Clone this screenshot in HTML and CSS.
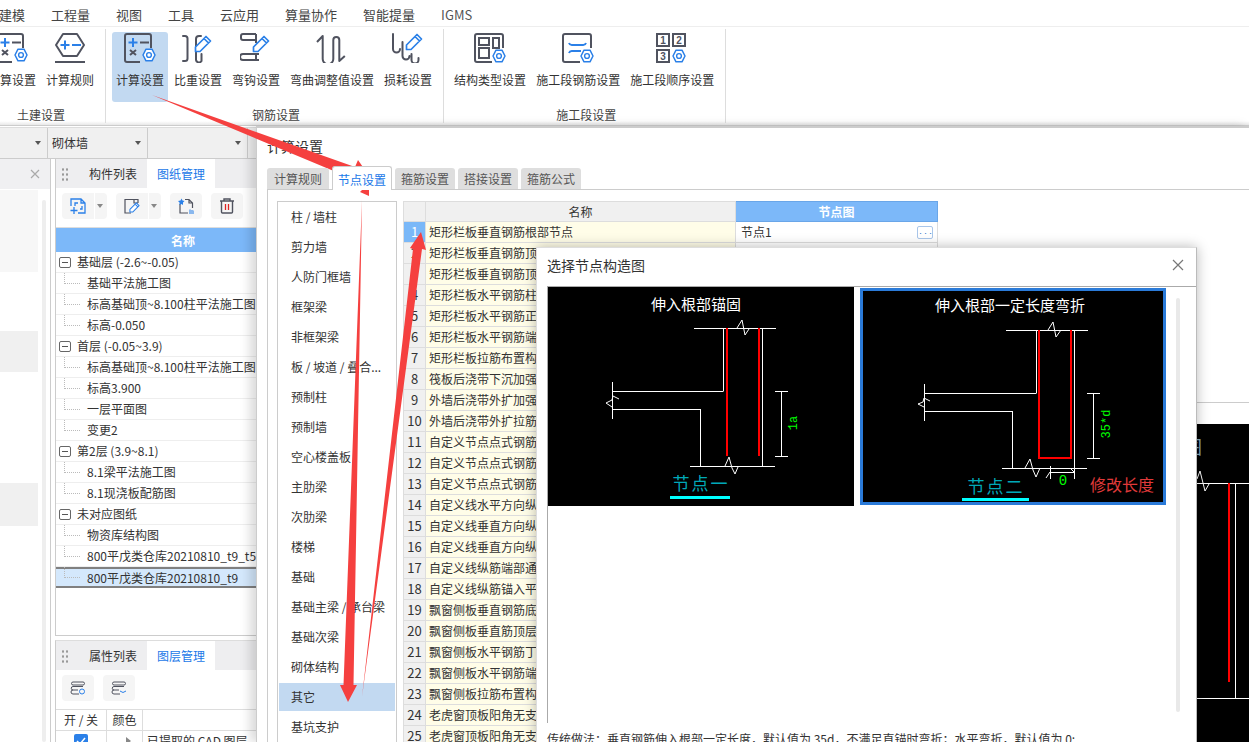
FILE: index.html
```html
<!DOCTYPE html>
<html lang="zh">
<head>
<meta charset="utf-8">
<title>计算设置</title>
<link rel="stylesheet" href="styles.css">
</head>
<body>
<svg class="defs" width="0" height="0">
  <symbol id="gear" viewBox="0 0 14 14"><polygon points="4,1.2 10,1.2 13,7 10,12.8 4,12.8 1,7" fill="#fff" stroke="#2b80e8" stroke-width="1.5" stroke-linejoin="round"/><circle cx="7" cy="7" r="2.4" fill="none" stroke="#2b80e8" stroke-width="1.4"/></symbol>
  <symbol id="pencil" viewBox="0 0 18 18"><path d="M1.500 16.500v-4.500L12 1.500l4.500 4.500L6 16.500z M10 3.500l4.500 4.500" fill="#fff" stroke="#2b80e8" stroke-width="1.700" stroke-linejoin="round"/></symbol>
  <symbol id="calc" viewBox="0 0 34 30"><path d="M28 15V3a2 2 0 0 0-2-2H4a2 2 0 0 0-2 2v24a2 2 0 0 0 2 2h13" fill="none" stroke="#50535f" stroke-width="2"/><path d="M10 5v9M5.500 9.500h9" stroke="#2b80e8" stroke-width="2"/><path d="M17 9.500h9" stroke="#50535f" stroke-width="2"/><path d="M7 17l6 5M13 17l-6 5" stroke="#50535f" stroke-width="2"/><use href="#gear" x="19" y="15" width="14" height="14"/></symbol>
</svg>

<header class="menu">
  <span class="menu-item menu-first">建模</span><span class="menu-item">工程量</span><span class="menu-item">视图</span><span class="menu-item">工具</span><span class="menu-item">云应用</span><span class="menu-item">算量协作</span><span class="menu-item">智能提量</span><span class="menu-item">IGMS</span>
</header>

<section class="ribbon">
  <div class="group group-first">
    <div class="btns">
      <div class="rbtn"><svg class="ico" width="34" height="30"><use href="#calc"/></svg><span>计算设置</span></div>
      <div class="rbtn"><svg class="ico" width="32" height="30" viewBox="0 0 32 30"><path d="M9 1h14l7 11-7 11H9L2 12z" fill="none" stroke="#50535f" stroke-width="2" stroke-linejoin="round"/><path d="M11 7.500v9M6.500 12h9" stroke="#2b80e8" stroke-width="2"/><path d="M18 12h9" stroke="#2b80e8" stroke-width="2"/><path d="M1 29h30" stroke="#50535f" stroke-width="2"/></svg><span>计算规则</span></div>
    </div>
    <div class="group-label">土建设置</div>
  </div>
  <div class="group">
    <div class="btns">
      <div class="rbtn rbtn-on"><svg class="ico" width="34" height="30"><use href="#calc"/></svg><span>计算设置</span></div>
      <div class="rbtn"><svg class="ico" width="32" height="30" viewBox="0 0 32 30"><path d="M1 3h2a2.500 2.500 0 0 1 2.500 2.500v20a2.500 2.500 0 0 1-2.500 2.500H1M19 3h-2a3 3 0 0 0-3 3v21a3 3 0 0 0 5.500 1V21" fill="none" stroke="#50535f" stroke-width="2" stroke-linecap="round"/><use href="#pencil" x="12" y="2" width="18" height="18"/></svg><span>比重设置</span></div>
      <div class="rbtn"><svg class="ico" width="32" height="30" viewBox="0 0 32 30"><path d="M16 1H3a2 2 0 0 0-2 2v2a2 2 0 0 0 2 2h13M16 1v9M3 21h16M3 27h16M16 21v6M3 21a3 3 0 0 0 0 6" fill="none" stroke="#50535f" stroke-width="2"/><use href="#pencil" x="12" y="2" width="18" height="18"/></svg><span>弯钩设置</span></div>
      <div class="rbtn"><svg class="ico" width="32" height="30" viewBox="0 0 32 30"><path d="M1 9l5.700-6V26a5 5 0 0 0 10.600 0V7a3 3 0 0 1 6 0V28l5.500-5" fill="none" stroke="#50535f" stroke-width="2" stroke-linejoin="round"/></svg><span>弯曲调整值设置</span></div>
      <div class="rbtn"><svg class="ico" width="32" height="30" viewBox="0 0 32 30"><path d="M1 1v15a3.500 3.500 0 0 0 7 0M10.500 9v14a3.500 3.500 0 0 0 7 0M19.500 21v6a3.500 3.500 0 0 0 7 0V25" fill="none" stroke="#50535f" stroke-width="2" stroke-linecap="round"/><use href="#pencil" x="13" y="0" width="18" height="18"/></svg><span>损耗设置</span></div>
    </div>
    <div class="group-label">钢筋设置</div>
  </div>
  <div class="group">
    <div class="btns">
      <div class="rbtn rbtn-wide"><svg class="ico" width="32" height="30" viewBox="0 0 32 30"><path d="M29 15V3a2 2 0 0 0-2-2H3a2 2 0 0 0-2 2v24a2 2 0 0 0 2 2h15" fill="none" stroke="#50535f" stroke-width="2"/><rect x="5" y="5" width="10" height="7" fill="none" stroke="#50535f" stroke-width="2"/><rect x="19" y="5" width="6" height="10" fill="none" stroke="#50535f" stroke-width="2"/><rect x="5" y="15" width="10" height="10" fill="none" stroke="#50535f" stroke-width="2"/><use href="#gear" x="18" y="16" width="14" height="14"/></svg><span>结构类型设置</span></div>
      <div class="rbtn"><svg class="ico" width="32" height="30" viewBox="0 0 32 30"><path d="M29 15V3a2 2 0 0 0-2-2H3a2 2 0 0 0-2 2v24a2 2 0 0 0 2 2h15" fill="none" stroke="#50535f" stroke-width="2"/><path d="M7 10a3 3 0 0 0 3 2h11a3 3 0 0 0 3-2M7 20a3 3 0 0 1 3-2h9" fill="none" stroke="#2b80e8" stroke-width="2"/><use href="#gear" x="18" y="16" width="14" height="14"/></svg><span>施工段钢筋设置</span></div>
      <div class="rbtn"><svg class="ico" width="32" height="30" viewBox="0 0 32 30"><rect x="1" y="1" width="12" height="12" fill="none" stroke="#50535f" stroke-width="2"/><rect x="17" y="1" width="12" height="12" fill="none" stroke="#50535f" stroke-width="2"/><rect x="1" y="17" width="12" height="12" fill="none" stroke="#50535f" stroke-width="2"/><text class="num-ico" x="7" y="11">1</text><text class="num-ico" x="23" y="11">2</text><text class="num-ico" x="7" y="27">3</text><use href="#gear" x="16" y="16" width="14" height="14"/></svg><span>施工段顺序设置</span></div>
    </div>
    <div class="group-label">施工段设置</div>
  </div>
</section>

<section class="combos">
  <div class="combo combo-first"><i class="caret"></i></div>
  <div class="combo"><span>砌体墙</span><i class="caret"></i></div>
  <div class="combo combo-end"><i class="caret"></i></div>
</section>

<main class="workspace">
  <aside class="side">
    <div class="side-head"><svg width="10" height="10" viewBox="0 0 10 10"><path d="M1 1l8 8M9 1l-8 8" stroke="#aaa" stroke-width="1.200"/></svg></div>
    <div class="side-body">
      <div class="side-list">
        <div class="side-fill"></div>
        <div class="side-sel side-sel-a"></div>
        <div class="side-sel side-sel-b"></div>
      </div>
      <div class="side-scroll"></div>
    </div>
  </aside>

  <div class="mid">
    <section class="panel panel-top">
      <div class="ptabs">
        <i class="grip"></i>
        <span class="ptab">构件列表</span>
        <span class="ptab ptab-on">图纸管理</span>
      </div>
      <div class="tools">
        <div class="tool tool-split"><svg width="16" height="16" viewBox="0 0 16 16"><path d="M1 8V1h10l4 4v10H8M11 1v4h4M5 8V5h3M12 8v3h-2" fill="none" stroke="#2b80e8" stroke-width="1.300"/><path d="M4 9v7M0.500 12.500h7" stroke="#2b80e8" stroke-width="1.300"/></svg><i class="tool-arrow"></i></div>
        <div class="tool tool-split"><svg width="16" height="16" viewBox="0 0 16 16"><path d="M14 5V1.500H4.500L1 1.500V15h6M10 1.500V5h4" fill="none" stroke="#50535f" stroke-width="1.200"/><use href="#pencil" x="5" y="4" width="11" height="11"/></svg><i class="tool-arrow"></i></div>
        <div class="tool"><svg width="16" height="16" viewBox="0 0 16 16"><path d="M7 1.500h4l3.500 3.500v5M10 15H2V6M11 1.500V5h3.500" fill="none" stroke="#50535f" stroke-width="1.200"/><path d="M3.500 0.500l1 2 2 .5-1.500 1.500v2.500L3.500 6 1.500 7V4.500L0 3l2.500-.5z" fill="#2b80e8"/><path d="M11 16v-4l1-1 1 1h2l1 1v3z" fill="#8ab8ee"/></svg></div>
        <div class="tool"><svg width="16" height="16" viewBox="0 0 16 16"><path d="M1 3h14M5 3V1h6v2M2.500 3v11a1 1 0 0 0 1 1h9a1 1 0 0 0 1-1V3" fill="none" stroke="#50535f" stroke-width="1.400"/><path d="M6.500 6v6M9.500 6v6" stroke="#d22" stroke-width="1.300"/></svg></div>
      </div>
      <div class="thead">名称</div>
      <div class="tree">
        <div class="row"><i class="box"></i><span>基础层 (-2.6~-0.05)</span></div>
        <div class="row"><i class="conn"></i><span>基础平法施工图</span></div>
        <div class="row"><i class="conn"></i><span>标高基础顶~8.100柱平法施工图</span></div>
        <div class="row"><i class="conn"></i><span>标高-0.050</span></div>
        <div class="row"><i class="box"></i><span>首层 (-0.05~3.9)</span></div>
        <div class="row"><i class="conn"></i><span>标高基础顶~8.100柱平法施工图</span></div>
        <div class="row"><i class="conn"></i><span>标高3.900</span></div>
        <div class="row"><i class="conn"></i><span>一层平面图</span></div>
        <div class="row"><i class="conn"></i><span>变更2</span></div>
        <div class="row"><i class="box"></i><span>第2层 (3.9~8.1)</span></div>
        <div class="row"><i class="conn"></i><span>8.1梁平法施工图</span></div>
        <div class="row"><i class="conn"></i><span>8.1现浇板配筋图</span></div>
        <div class="row"><i class="box"></i><span>未对应图纸</span></div>
        <div class="row"><i class="conn"></i><span>物资库结构图</span></div>
        <div class="row"><i class="conn"></i><span>800平戊类仓库20210810_t9_t5</span></div>
        <div class="row row-sel"><i class="conn"></i><span>800平戊类仓库20210810_t9</span></div>
      </div>
    </section>
    <section class="panel panel-bottom">
      <div class="ptabs">
        <i class="grip"></i>
        <span class="ptab">属性列表</span>
        <span class="ptab ptab-on">图层管理</span>
      </div>
      <div class="tools tools-b">
        <div class="tool"><svg width="16" height="14" viewBox="0 0 16 14"><path d="M3 1h10a1.500 1.500 0 0 1 0 3H3a1.500 1.500 0 0 1 0-3zM3 5.500h10M3 9h5M3 13h6M3 5.500a1.500 1.500 0 0 0 0 3.500M3 9a2 2 0 0 0 0 4" fill="none" stroke="#50535f" stroke-width="1"/><circle cx="12" cy="10.500" r="2.500" fill="none" stroke="#2b80e8"/></svg></div>
        <div class="tool"><svg width="16" height="14" viewBox="0 0 16 14"><path d="M3 1h10a1.500 1.500 0 0 1 0 3H3a1.500 1.500 0 0 1 0-3zM3 5.500h10M3 9h5M3 13h6M3 5.500a1.500 1.500 0 0 0 0 3.500M3 9a2 2 0 0 0 0 4" fill="none" stroke="#50535f" stroke-width="1"/><path d="M9 10q3 3 6 0" fill="none" stroke="#2b80e8"/></svg></div>
      </div>
      <div class="lhead"><span class="lc1">开 / 关</span><span class="lc2">颜色</span><span class="lc3"></span></div>
      <div class="lrow"><span class="lc1"><svg class="check" width="14" height="14" viewBox="0 0 14 14"><rect width="14" height="14" rx="2" fill="#2b80e8"/><path d="M3 7l3 3 5-6" fill="none" stroke="#fff" stroke-width="1.500"/></svg></span><span class="lc2"><i class="tri"></i></span><span class="lc3">已提取的 CAD 图层</span></div>
    </section>
  </div>
</main>

<section class="dlg">
  <h1 class="dlg-title">计算设置</h1>
  <nav class="dtabs">
    <span class="dtab">计算规则</span>
    <span class="dtab dtab-on">节点设置</span>
    <span class="dtab">箍筋设置</span>
    <span class="dtab">搭接设置</span>
    <span class="dtab">箍筋公式</span>
  </nav>
  <div class="dbody">
    <ul class="cats">
      <li>柱 / 墙柱</li><li>剪力墙</li><li>人防门框墙</li><li>框架梁</li><li>非框架梁</li><li>板 / 坡道 / 叠合...</li><li>预制柱</li><li>预制墙</li><li>空心楼盖板</li><li>主肋梁</li><li>次肋梁</li><li>楼梯</li><li>基础</li><li>基础主梁 / 承台梁</li><li>基础次梁</li><li>砌体结构</li><li class="cat-on">其它</li><li>基坑支护</li>
    </ul>
    <table class="grid">
      <colgroup><col class="c-num"><col class="c-name"><col class="c-pic"></colgroup>
      <thead><tr><th></th><th>名称</th><th class="th-on">节点图</th></tr></thead>
      <tbody>
        <tr class="tr-on"><td class="n">1</td><td class="t">矩形栏板垂直钢筋根部节点</td><td class="p"><div class="pic-cell"><span>节点1</span><i class="dots">•••</i></div></td></tr>
        <tr><td class="n">2</td><td class="t">矩形栏板垂直钢筋顶</td><td></td></tr>
        <tr><td class="n">3</td><td class="t">矩形栏板垂直钢筋顶</td><td></td></tr>
        <tr><td class="n">4</td><td class="t">矩形栏板水平钢筋柱</td><td></td></tr>
        <tr><td class="n">5</td><td class="t">矩形栏板水平钢筋正</td><td></td></tr>
        <tr><td class="n">6</td><td class="t">矩形栏板水平钢筋端</td><td></td></tr>
        <tr><td class="n">7</td><td class="t">矩形栏板拉筋布置构</td><td></td></tr>
        <tr><td class="n">8</td><td class="t">筏板后浇带下沉加强</td><td></td></tr>
        <tr><td class="n">9</td><td class="t">外墙后浇带外扩加强</td><td></td></tr>
        <tr><td class="n">10</td><td class="t">外墙后浇带外扩拉筋</td><td></td></tr>
        <tr><td class="n">11</td><td class="t">自定义节点点式钢筋</td><td></td></tr>
        <tr><td class="n">12</td><td class="t">自定义节点点式钢筋</td><td></td></tr>
        <tr><td class="n">13</td><td class="t">自定义节点点式钢筋</td><td></td></tr>
        <tr><td class="n">14</td><td class="t">自定义线水平方向纵</td><td></td></tr>
        <tr><td class="n">15</td><td class="t">自定义线垂直方向纵</td><td></td></tr>
        <tr><td class="n">16</td><td class="t">自定义线垂直方向纵</td><td></td></tr>
        <tr><td class="n">17</td><td class="t">自定义线纵筋端部通</td><td></td></tr>
        <tr><td class="n">18</td><td class="t">自定义线纵筋锚入平</td><td></td></tr>
        <tr><td class="n">19</td><td class="t">飘窗侧板垂直钢筋底</td><td></td></tr>
        <tr><td class="n">20</td><td class="t">飘窗侧板垂直筋顶层</td><td></td></tr>
        <tr><td class="n">21</td><td class="t">飘窗侧板水平钢筋丁</td><td></td></tr>
        <tr><td class="n">22</td><td class="t">飘窗侧板水平钢筋端</td><td></td></tr>
        <tr><td class="n">23</td><td class="t">飘窗侧板拉筋布置构</td><td></td></tr>
        <tr><td class="n">24</td><td class="t">老虎窗顶板阳角无支</td><td></td></tr>
        <tr><td class="n">25</td><td class="t">老虎窗顶板阳角无支</td><td></td></tr>
      </tbody>
    </table>
  </div>

  <div class="preview">
    <svg class="preview-svg" width="53" height="318" viewBox="0 0 53 318">
      <text class="pv-txt" x="-13" y="30">图</text>
      <path class="wl" d="M0 59.500h53M38.500 59.500V274.500M0 274.500h53M0 55l3-8 5 20 4-7" fill="none"/>
      <rect x="31" y="59" width="2" height="199" fill="#f00"/>
    </svg>
  </div>
</section>

<section class="pick">
  <h2 class="pick-title"><span>选择节点构造图</span><svg width="12" height="12" viewBox="0 0 12 12"><path d="M1 1l10 10M11 1L1 11" stroke="#777" stroke-width="1.200"/></svg></h2>
  <div class="pick-frame">
    <svg class="draw draw-a" width="306" height="219" viewBox="0 0 306 219">
      <text class="dt" x="148" y="23">伸入根部锚固</text>
      <g class="wl" fill="none">
        <path d="M146 41.500h82M189 41l5-8 3 15 4-6M175.500 41v63M64.500 104.500h111M64.500 95v37M64.500 122.500h88M152.500 122v57M142 179.500h85M177 179l4-9 3 11 3 6 3-7M214.500 41v138"/>
        <path d="M71 112l-6-3-1 4-6 3 6 4M233.500 104v65M227 104.500h13M227 169.500h13"/>
      </g>
      <rect x="178" y="41" width="2" height="128" fill="#f00"/>
      <rect x="210" y="41" width="2" height="128" fill="#f00"/>
      <text class="dg" transform="translate(249 136) rotate(-90)" x="0" y="0">1a</text>
      <text class="dn" x="153" y="203">节点一</text>
      <rect x="122" y="209" width="60" height="3" fill="#0ff"/>
    </svg>
    <svg class="draw draw-b" width="306" height="217" viewBox="0 0 306 217">
      <rect x="1.500" y="1.500" width="303" height="214" fill="#000" stroke="#2a7ad8" stroke-width="3"/>
      <text class="dt" x="150" y="23">伸入根部一定长度弯折</text>
      <g class="wl" fill="none">
        <path d="M146 42.500h82M188 42l5-8 3 15 5-7M176.500 42v63M64.500 105.500h112M64.500 96v37M64.500 123.500h88M152.500 123v57M142 180.500h85M165 180l5-9 3 11 3 7 4-9M214.500 42v149"/>
        <path d="M70 113l-6-3-1 4-5 2 6 3M233.500 105v65M227 105.500h13M227 170.500h13M190.500 178v13M190.500 184.500h24M186 190l4-6M210 180l5 5"/>
      </g>
      <path d="M179 42v128h32V42" fill="none" stroke="#f00" stroke-width="2"/>
      <text class="dg" transform="translate(250 136) rotate(-90)" x="0" y="0">35*d</text>
      <text class="dg dg-zero" x="203" y="197">0</text>
      <text class="dn" x="136" y="205">节点二</text>
      <rect x="102" y="210" width="67" height="3" fill="#0ff"/>
      <text class="dr" x="230" y="203">修改长度</text>
    </svg>
    <div class="vscroll"></div>
  </div>
  <p class="pick-desc">传统做法：垂直钢筋伸入根部一定长度，默认值为 35d，不满足直锚时弯折；水平弯折，默认值为 0;</p>
</section>

<svg class="arrows" width="1249" height="742" viewBox="0 0 1249 742">
  <polygon points="152,95 355,167 358,160 372,180 347.700,185 350.500,178"/>
  <polygon points="362,200 353.500,685 357,685 348,702 340,685 343.500,685"/>
  <polygon points="362,697 422,249 426,250 421,232 410,248 413,249"/>
  <polygon points="360,192 369,183 369,196"/>
</svg>
</body>
</html>
```
FILE: styles.css
```css
* { box-sizing: border-box; }
html, body { margin: 0; padding: 0; }
body {
  position: relative;
  width: 1249px;
  height: 742px;
  overflow: hidden;
  background: #fff;
  color: #333;
  font: 12px/18px "Noto Sans CJK SC", "Noto Sans", sans-serif;
  display: flex;
  flex-direction: column;
}
.defs { position: absolute; }
h1, h2, p, ul { margin: 0; padding: 0; font-weight: normal; }
ul { list-style: none; }
i { font-style: normal; }

.menu { height: 27px; flex: none; display: flex; border-bottom: 1px solid #eee; font-size: 13px; line-height: 30px; color: #444; }
.menu-item { margin-right: 26px; }
.menu-first { margin-left: -1px; }
.menu-item:last-child { color: #555; }

.ribbon { height: 99px; flex: none; display: flex; background: linear-gradient(#fff 96%, #e8e8e8); border-bottom: 1px solid #ccc; }
.group { height: 94px; margin-top: 2px; padding: 3px 7px 0 6px; border-right: 1px solid #ddd; display: flex; flex-direction: column; }
.group-first { margin-left: -16px; padding-left: 0; }
.btns { display: flex; gap: 2px; height: 70px; flex: none; }
.rbtn { height: 70px; padding: 1px 4px 0; display: flex; flex-direction: column; align-items: center; white-space: nowrap; border-radius: 3px; }
.rbtn span { margin-top: 8px; }
.rbtn-on { background: #c2d9f1; }
.rbtn-wide { padding: 1px 4px 0; }
.ico { flex: none; display: block; }
.num-ico { font: bold 10px "Liberation Sans", sans-serif; fill: #50535f; text-anchor: middle; }
.group-label { margin-top: 4px; padding-left: 4px; line-height: 17px; text-align: center; color: #444; }
.group-first .group-label { padding-left: 0; }

.combos { flex: none; height: 32px; margin-top: 1px; display: flex; background: #f0f0f0; border-top: 1px solid #ddd; border-bottom: 1px solid #ccc; }
.combo { width: 100px; padding: 0 4px; display: flex; align-items: center; justify-content: space-between; border-right: 1px solid #ccc; }
.combo-first { width: 48px; justify-content: flex-end; padding-right: 4px; }
.combo-end { justify-content: flex-end; }
.caret { width: 0; height: 0; border: 3px solid transparent; border-top: 4px solid #555; border-bottom: 0; margin-right: 2px; }

.workspace { flex: 1; min-height: 0; display: flex; gap: 4px; }
.side { width: 51px; flex: none; border-right: 1px solid #ccc; display: flex; flex-direction: column; }
.side-head { height: 30px; flex: none; background: #f0f0f2; display: flex; align-items: center; justify-content: flex-end; padding-right: 10px; }
.side-body { flex: 1; display: flex; padding-top: 1px; }
.side-list { width: 38px; position: relative; }
.side-fill { height: 82px; background: #f7f7f7; }
.side-sel { position: absolute; left: 0; right: 0; background: #f0f0f0; }
.side-sel-a { top: 141px; height: 41px; }
.side-sel-b { top: 293px; height: 43px; }
.side-scroll { width: 4px; margin: 10px 0 0 4px; background: #eee; border-radius: 2px; }

.mid { width: 256px; flex: none; display: flex; flex-direction: column; }
.panel { border: 1px solid #ccc; border-top: 0; border-bottom: 0; overflow: hidden; }
.panel-top { height: 477px; flex: none; border-bottom: 1px solid #ccc; }
.panel-bottom { margin-top: 4px; flex: 1; border-top: 1px solid #ddd; }
.ptabs { height: 29px; background: #eeeef0; display: flex; align-items: center; font-size: 12px; }
.grip { width: 17px; height: 14px; flex: none; background: radial-gradient(circle, #999 1px, transparent 1.300px) 5px 0 / 4px 5px; background-clip: content-box; padding: 0 3px 0 6px; }
.ptab { width: 74px; height: 29px; line-height: 29px; padding-left: 6px; text-align: center; }
.ptab-on { width: 68px; padding-left: 0; background: #fff; color: #1a78e8; }
.tools { height: 39px; padding: 5px 0 0 6px; display: flex; gap: 9px; }
.tools-b { height: 39px; }
.tool { width: 32px; height: 26px; background: #f5f5f5; border-radius: 4px; display: flex; align-items: center; justify-content: center; }
.tool-split { width: 45px; justify-content: flex-start; padding-left: 8px; position: relative; }
.tool-split::after { content: ""; position: absolute; left: 32px; top: 0; bottom: 0; width: 1px; background: #fff; }
.tool-arrow { position: absolute; right: 4px; top: 11px; width: 0; height: 0; border: 3px solid transparent; border-top: 4px solid #888; border-bottom: 0; }
.thead { height: 25px; background: #7cb8f9; color: #fff; text-align: center; line-height: 25px; font-weight: bold; border-top: 1px solid #ddd; }
.row { height: 21px; display: flex; align-items: center; padding-left: 3px; border-bottom: 1px solid #eee; white-space: nowrap; }
.box { width: 12px; height: 11px; border: 1px solid #666; border-radius: 2px; margin-right: 6px; position: relative; flex: none; }
.box::after { content: ""; position: absolute; left: 2px; right: 2px; top: 4px; height: 1px; background: #555; }
.conn { width: 16px; height: 11px; margin: -10px 7px 0 5px; border-left: 1px dotted #bbb; border-bottom: 1px dotted #bbb; flex: none; }
.row-sel { background: #d4e8fc; border-top: 2px solid #808080; border-bottom: 2px solid #808080; }
.lhead, .lrow { display: flex; height: 21px; line-height: 20px; border-top: 1px solid #ddd; }
.lc1 { width: 51px; text-align: center; border-right: 1px solid #ddd; flex: none; }
.lc2 { width: 36px; text-align: center; border-right: 1px solid #ddd; flex: none; display: flex; align-items: center; justify-content: center; }
.lc3 { padding-left: 4px; white-space: nowrap; }
.check { display: inline-block; margin-top: 3px; }
.tri { width: 0; height: 0; border: 4px solid transparent; border-left: 5px solid #888; border-right: 0; margin-left: 8px; }

.dlg { position: absolute; left: 256px; top: 126px; right: 0; bottom: 0; background: #fff; border-top: 2px solid #ccc; border-left: 1px solid #ccc; box-shadow: -6px 0 10px rgba(0,0,0,.15); overflow: hidden; }
.dlg-title { font-size: 14px; line-height: 20px; padding: 8px 0 0 10px; color: #333; }
.dtabs { height: 23px; margin-top: 10px; margin-left: 10px; display: flex; align-items: flex-end; gap: 3px; position: relative; z-index: 1; }
.dtab { width: 60px; height: 21px; line-height: 21px; text-align: center; background: #dedede; border-radius: 3px 3px 0 0; color: #555; }
.dtab-on { height: 24px; line-height: 25px; margin: 0 0 -1px; background: #fff; color: #1a78e8; border: 1px solid #ccc; border-bottom: 0; }
.dtab:first-child { width: 62px; }
.dbody { margin-left: 10px; border-top: 1px solid #ccc; border-left: 1px solid #ccc; padding: 11px 0 0 9px; display: flex; gap: 6px; align-items: flex-start; height: 560px; }
.cats { width: 120px; height: 560px; flex: none; border: 1px solid #ccc; padding: 0 1px; }
.cats li { height: 30px; line-height: 30px; padding-left: 12px; white-space: nowrap; overflow: hidden; }
.cats .cat-on { height: 28px; margin-top: 1px; margin-bottom: 1px; line-height: 28px; background: #c2d9f1; }
.grid { width: 534px; table-layout: fixed; border-collapse: collapse; flex: none; }
.c-num { width: 22px; } .c-name { width: 310px; } .c-pic { width: 202px; }
.grid th, .grid td { height: 21px; padding: 0; line-height: 20px; font-weight: normal; border: 1px solid #ddd; white-space: nowrap; overflow: hidden; }
.grid th { height: 20px; line-height: 19px; background: #f0f0f0; text-align: center; }
.grid .th-on { background: #7cb8f9; color: #fff; font-weight: bold; border-color: #6aa6e8; }
.n { background: #f0f0f0; text-align: center; font-size: 13px; }
.t { background: #fffde8; padding-left: 3px !important; }
.tr-on .n { background: #7ab8f8; color: #fff; }
.p { padding: 0 !important; }
.pic-cell { display: flex; justify-content: space-between; align-items: center; padding: 0 4px 0 5px; }
.dots { width: 16px; height: 13px; border: 1px solid #a9c6ea; border-radius: 2px; color: #2b70c8; font-size: 5px; line-height: 11px; text-align: center; letter-spacing: 0; }
.preview { position: absolute; left: 940px; top: 274px; right: 0; bottom: 0; border-top: 1px solid #ccc; padding-top: 21px; }
.preview-svg { display: block; background: #000; }
.pv-txt { fill: #8ab; font-size: 18px; }
.wl { stroke: #fff; stroke-width: 1; }

.pick { position: absolute; left: 536px; top: 247px; width: 661px; bottom: 0; background: #fff; border-left: 1px solid #ddd; border-right: 1px solid #bbb; border-top: 1px solid #ddd; box-shadow: 0 0 12px rgba(0,0,0,.28); padding-left: 10px; overflow: hidden; }
.pick-title { height: 38px; padding: 0 12px 4px 0; font-size: 14px; line-height: 20px; display: flex; justify-content: space-between; align-items: center; }
.pick-frame { height: 437px; border-top: 1px solid #aaa; border-left: 1px solid #aaa; display: flex; align-items: flex-start; }
.draw { flex: none; display: block; background: #000; }
.draw-b { margin: 1px 0 0 6px; }
.vscroll { width: 4px; height: 414px; margin: 11px 0 0 10px; background: #e9e9e9; border-radius: 2px; flex: none; }
.pick-desc { margin-top: 7px; white-space: nowrap; color: #333; }
.dt { fill: #fff; font-size: 15px; text-anchor: middle; }
.dg { fill: #0f0; font: 12px "Liberation Mono", monospace; text-anchor: middle; }
.dg-zero { font-size: 14px; }
.dn { fill: #00a8b8; font-size: 17px; text-anchor: middle; letter-spacing: 2px; }
.dr { fill: #e03a3a; font-size: 16px; }

.arrows { position: absolute; left: 0; top: 0; pointer-events: none; }
.arrows polygon { fill: #f5403f; }
```
